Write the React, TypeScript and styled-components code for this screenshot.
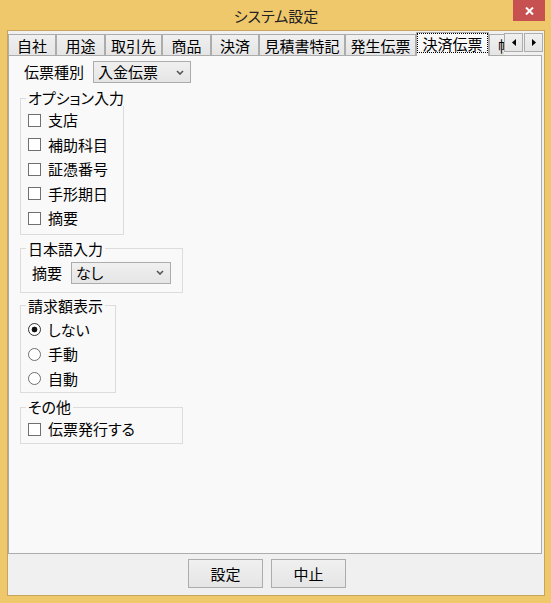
import React from 'react';
import styled, { createGlobalStyle } from 'styled-components';

const GlobalStyle = createGlobalStyle`
  html, body {
    margin: 0;
    padding: 0;
    background: #ffffff;
  }
  body {
    font-family: "Noto Sans CJK JP", "Noto Sans", sans-serif;
    font-size: 15px;
    font-feature-settings: "palt";
    color: #000000;
  }
`;

// ウィンドウ枠
const Window = styled.div`
  width: 551px;
  height: 603px;
  box-sizing: border-box;
  background: #f0c86c;
  padding: 0 6px 7px 7px;
  display: flex;
  flex-direction: column;
`;

const TitleBar = styled.div`
  height: 30px;
  flex: none;
  display: grid;
  grid-template-columns: 1fr auto 1fr;
`;

const Title = styled.div`
  grid-column: 2;
  align-self: center;
  font-size: 15px;
  line-height: 20px;
  color: #222222;
  padding-top: 2px;
`;

const CloseButton = styled.div`
  grid-column: 3;
  justify-self: end;
  width: 32px;
  height: 21px;
  background: #c75050;
  display: flex;
  align-items: center;
  justify-content: center;
`;

const Client = styled.div`
  flex: 1;
  min-height: 0;
  border: 1px solid #c8a55c;
  background: #f0f0f0;
  display: flex;
  flex-direction: column;
`;

// タブ
const TabStrip = styled.div`
  height: 24px;
  flex: none;
  display: flex;
  position: relative;
  z-index: 1;
`;

const TabList = styled.div`
  width: 496px;
  display: flex;
  align-items: flex-end;
  overflow-x: clip;
  overflow-y: visible;
`;

const Tab = styled.div<{ $w: number; $active?: boolean }>`
  flex: none;
  box-sizing: border-box;
  width: ${(p) => p.$w}px;
  height: ${(p) => (p.$active ? 24 : 21)}px;
  margin-bottom: ${(p) => (p.$active ? -1 : 0)}px;
  border: 1px solid #acacac;
  border-bottom: none;
  background: ${(p) =>
    p.$active ? '#f9f9f9' : 'linear-gradient(#f0f0f0, #e5e5e5)'};
  display: flex;
  align-items: stretch;
  justify-content: ${(p) => (p.$w > 40 ? 'center' : 'flex-start')};
  white-space: nowrap;
  line-height: 19px;
  padding: ${(p) => (p.$active ? '0 0 3px' : '0')};
`;

const TabLabel = styled.span<{ $focus?: boolean }>`
  display: flex;
  align-items: center;
  justify-content: center;
  flex: ${(p) => (p.$focus ? 1 : 'none')};
  border: 1px dotted ${(p) => (p.$focus ? '#000000' : 'transparent')};
  margin: 0 ${(p) => (p.$focus ? 0 : 0)}px;
  padding-top: ${(p) => (p.$focus ? 1 : 0)}px;
`;

const Scroller = styled.div`
  display: flex;
  gap: 1px;
  margin-top: 2px;
  align-self: flex-start;
`;

const ScrollButton = styled.div`
  width: 19px;
  height: 19px;
  box-sizing: border-box;
  border: 1px solid #acacac;
  background: linear-gradient(#f0f0f0, #e5e5e5);
  display: flex;
  align-items: center;
  justify-content: center;
`;

const Panel = styled.div`
  flex: 1;
  margin-right: 2px;
  background: #f9f9f9;
  border: 1px solid #acacac;
  padding: 5px 0 0 11px;
  display: flex;
  flex-direction: column;
  align-items: flex-start;
`;

// フォーム部品
const FormRow = styled.div<{ $indent: number }>`
  display: flex;
  align-items: center;
  gap: 9px;
  height: 22px;
  padding-left: ${(p) => p.$indent}px;
  line-height: 20px;
`;

const Select = styled.div<{ $w: number }>`
  width: ${(p) => p.$w}px;
  height: 22px;
  box-sizing: border-box;
  border: 1px solid #acacac;
  background: linear-gradient(#f0f0f0, #e5e5e5);
  padding: 0 6px 0 4px;
  display: flex;
  align-items: center;
  justify-content: space-between;
  line-height: 20px;
`;

const Group = styled.fieldset<{ $w: number; $mt: number; $pt: number; $pb: number }>`
  width: ${(p) => p.$w}px;
  box-sizing: border-box;
  min-width: 0;
  margin: ${(p) => p.$mt}px 0 0 0;
  border: 1px solid #dcdcdc;
  padding: ${(p) => p.$pt}px 4px ${(p) => p.$pb}px 7px;
`;

const Legend = styled.legend`
  padding: 0 2px;
  margin-left: -2px;
  height: 16px;
  line-height: 16px;
  white-space: nowrap;
`;

const OptionRow = styled.div`
  display: flex;
  align-items: center;
  gap: 7px;
  height: 24.5px;
  line-height: 20px;
  white-space: nowrap;
`;

const CheckBox = styled.span`
  flex: none;
  width: 13px;
  height: 13px;
  box-sizing: border-box;
  border: 1px solid #707070;
  background: #ffffff;
`;

const Radio = styled.span<{ $checked?: boolean }>`
  flex: none;
  width: 13px;
  height: 13px;
  box-sizing: border-box;
  border-radius: 50%;
  border: 1px solid ${(p) => (p.$checked ? '#333333' : '#707070')};
  background: ${(p) =>
    p.$checked
      ? 'radial-gradient(circle, #111111 0 2.6px, #ffffff 3.2px)'
      : '#ffffff'};
`;

const Footer = styled.div`
  height: 41px;
  flex: none;
  box-sizing: border-box;
  display: flex;
  align-items: flex-start;
  gap: 8px;
  padding: 5px 0 0 180px;
`;

const Button = styled.div`
  width: 75px;
  height: 29px;
  box-sizing: border-box;
  border: 1px solid #acacac;
  background: linear-gradient(#f0f0f0, #e5e5e5);
  display: flex;
  align-items: center;
  justify-content: center;
  line-height: 20px;
`;

const Chevron = () => (
  <svg width="8" height="5" viewBox="0 0 8 5">
    <path d="M1 1 L4 4 L7 1" fill="none" stroke="#555" strokeWidth="1.6" />
  </svg>
);

const tabs = [
  { label: '自社', w: 48 },
  { label: '用途', w: 49 },
  { label: '取引先', w: 57 },
  { label: '商品', w: 49 },
  { label: '決済', w: 48 },
  { label: '見積書特記', w: 86 },
  { label: '発生伝票', w: 71 },
  { label: '決済伝票', w: 73, active: true },
  { label: '帳票', w: 48 },
];

const options = ['支店', '補助科目', '証憑番号', '手形期日', '摘要'];
const billing = ['しない', '手動', '自動'];

const App: React.FC = () => {
  return (
    <>
      <GlobalStyle />
      <Window>
        <TitleBar>
          <Title>システム設定</Title>
          <CloseButton>
            <svg width="9" height="8" viewBox="0 0 9 8">
              <path d="M1 0.5 L8 7.5 M8 0.5 L1 7.5" stroke="#fff" strokeWidth="2" />
            </svg>
          </CloseButton>
        </TitleBar>

        <Client>
          <TabStrip>
            <TabList>
              {tabs.map((t) => (
                <Tab key={t.label} $w={t.w} $active={t.active}>
                  <TabLabel $focus={t.active}>{t.label}</TabLabel>
                </Tab>
              ))}
            </TabList>
            <Scroller>
              <ScrollButton>
                <svg width="4" height="7" viewBox="0 0 4 7">
                  <path d="M4 0 L0 3.5 L4 7 Z" fill="#000" />
                </svg>
              </ScrollButton>
              <ScrollButton>
                <svg width="4" height="7" viewBox="0 0 4 7">
                  <path d="M0 0 L4 3.5 L0 7 Z" fill="#000" />
                </svg>
              </ScrollButton>
            </Scroller>
          </TabStrip>

          <Panel>
            <FormRow $indent={4}>
              <span>伝票種別</span>
              <Select $w={98}>
                <span>入金伝票</span>
                <Chevron />
              </Select>
            </FormRow>

            <Group $w={104} $mt={7} $pt={2} $pb={3}>
              <Legend>オプション入力</Legend>
              {options.map((o) => (
                <OptionRow key={o}>
                  <CheckBox />
                  <span>{o}</span>
                </OptionRow>
              ))}
            </Group>

            <Group $w={163} $mt={6} $pt={5} $pb={8}>
              <Legend>日本語入力</Legend>
              <FormRow $indent={4}>
                <span>摘要</span>
                <Select $w={100}>
                  <span>なし</span>
                  <Chevron />
                </Select>
              </FormRow>
            </Group>

            <Group $w={96} $mt={5} $pt={4} $pb={1}>
              <Legend>請求額表示</Legend>
              {billing.map((b, i) => (
                <OptionRow key={b}>
                  <Radio $checked={i === 0} />
                  <span>{b}</span>
                </OptionRow>
              ))}
            </Group>

            <Group $w={163} $mt={6} $pt={2} $pb={1}>
              <Legend>その他</Legend>
              <OptionRow>
                <CheckBox />
                <span>伝票発行する</span>
              </OptionRow>
            </Group>
          </Panel>

          <Footer>
            <Button>設定</Button>
            <Button>中止</Button>
          </Footer>
        </Client>
      </Window>
    </>
  );
};

export default App;
